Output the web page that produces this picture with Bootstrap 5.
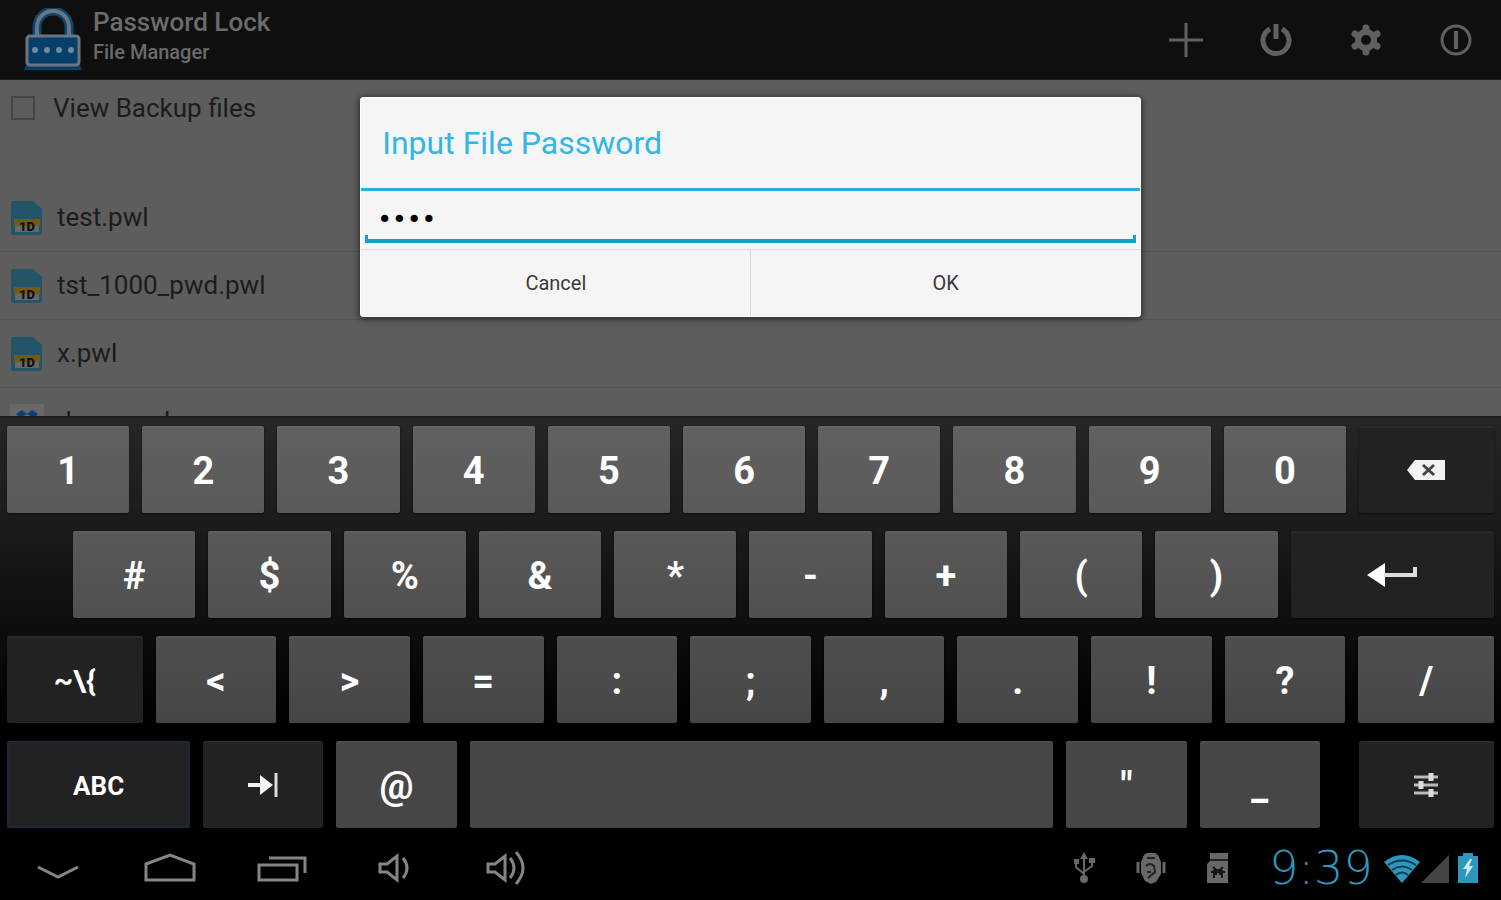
<!DOCTYPE html>
<html lang="en">
<head>
<meta charset="utf-8">
<meta name="viewport" content="width=device-width, initial-scale=1">
<title>Password Lock</title>
<link href="https://cdn.jsdelivr.net/npm/bootstrap@5.3.0/dist/css/bootstrap.min.css" rel="stylesheet">
<style>
  body { font-family: Roboto, "Liberation Sans", sans-serif; background: #000; }
  button { font-family: inherit; }
  svg { display: block; flex: none; }

  .app-bar { height: 80px; background: #0f0f0f; color: #6b6b6b; border-bottom: 1px solid #1c1c1c; padding-left: 24px; }
  .app-titles { padding: 6px 0 0 11px; }
  .app-title { font-size: 26px; line-height: 32px; font-weight: 500; }
  .app-sub { font-size: 20px; line-height: 28px; font-weight: 500; }
  .bar-action { width: 90px; border: 0; background: none; color: #606060; padding: 0; }

  .files-pane { background: #5d5d5d; color: #1c1c1c; font-size: 26px; min-height: 0; }
  .backup-row { height: 56px; padding: 0 11px; gap: 18px; }
  .backup-row input { appearance: none; width: 24px; height: 24px; margin: 0; border: 2px solid #454545; background: none; }
  .file-list { margin-top: 48px; }
  .file-row { height: 68px; padding: 0 10px; gap: 13px; border-bottom: 1px solid #545454; color: inherit; text-decoration: none; }

  .ask-box { width: 52%; margin-top: 17px; background: #f5f5f5; border: 1px solid #fdfdfd; border-radius: 3px; box-shadow: 0 1px 6px 1px rgba(0,0,0,.55); }
  .ask-title { font-size: 32px; line-height: 90px; color: #33b5e5; padding-left: 21px; border-bottom: 3px solid #27afdd; font-weight: 400; }
  .ask-input { display: block; width: calc(100% - 8px); height: 52px; margin: 0 4px 6px; padding: 4px 12px 0; border: 0; outline: 0; color: #000; font-family: "DejaVu Sans", sans-serif; font-size: 25px;
    background: linear-gradient(#1a9bc9,#1a9bc9) bottom/100% 4px no-repeat, linear-gradient(#1a9bc9,#1a9bc9) left bottom/3px 8px no-repeat, linear-gradient(#1a9bc9,#1a9bc9) right bottom/3px 8px no-repeat; }
  .ask-btn { height: 67px; border: 0; border-top: 1px solid #dedede; background: none; color: #3a3a3a; font-size: 20px; }
  .ask-btn + .ask-btn { border-left: 1px solid #d8d8d8; }

  .keyboard { background: linear-gradient(#262626, #191919 30%, #0b0b0b 55%, #000 75%); border-top: 2px solid #1b1b1b; padding: 8px 7px 5px; gap: 18px; }
  .key-row { gap: 13px; height: 87px; }
  .key { flex: 122 1 0; min-width: 0; border: 0; border-radius: 2px; padding: 3px 0 0; color: #fff; font-size: 38px; line-height: 44px; font-weight: 700;
    background: rgba(255,255,255,.275); box-shadow: inset 0 2px 0 rgba(255,255,255,.04), 0 1px 2px rgba(0,0,0,.6); }
  .key-sm { flex-grow: 120; }
  .key-dark { background: #222; font-size: 26px; }
  .key-alt { font-size: 30px; }
  .key-icon { padding: 0; }
  .key-end { flex-grow: 135; }
  .key-enter { flex-grow: 203; }
  .key-abc { flex-grow: 183; box-shadow: inset 0 0 0 2px #152c37; }
  .key-space { flex-grow: 583; }
  .gap-lead { flex: 53 1 0; }
  .gap-tail { flex: 13 1 0; }

  .sys-bar { height: 67px; padding: 2px 22px 0 2px; color: #858585; }
  .sys-btn { width: 112px; height: 65px; border: 0; background: none; color: inherit; padding: 0; }
  .sys-note { width: 67px; color: #686868; }
  .clock { width: 124px; font-family: "DejaVu Sans Light", "DejaVu Sans", sans-serif; font-weight: 200; font-size: 46px; line-height: 48px; color: #2f97bd; }
</style>
</head>
<body>
<div class="d-flex flex-column vh-100 overflow-hidden">

  <header class="app-bar d-flex flex-shrink-0">
    <svg class="mt-2" width="58" height="64" viewBox="0 0 58 64">
      <path d="M0 62h58l-3-8H3z" fill="#073f6b"/>
      <path d="M13 27V19a16 16 0 0 1 32 0v8" fill="none" stroke="#0c4674" stroke-width="9"/>
      <path d="M13 27V19a16 16 0 0 1 32 0v8" fill="none" stroke="#6b7580" stroke-width="4"/>
      <rect x="3" y="28" width="52" height="29" rx="3" fill="#073f6b" stroke="#6b7580" stroke-width="3"/>
      <g fill="#6d8aa0"><circle cx="11" cy="42" r="3"/><circle cx="23" cy="42" r="3"/><circle cx="35" cy="42" r="3"/><circle cx="47" cy="42" r="3"/></g>
    </svg>
    <div class="app-titles flex-grow-1">
      <div class="app-title">Password Lock</div>
      <div class="app-sub">File Manager</div>
    </div>
    <button class="bar-action d-flex align-items-center justify-content-center" aria-label="Add">
      <svg width="36" height="36" viewBox="0 0 36 36" stroke="currentColor" stroke-width="3"><path d="M18 1v34M1 18h34"/></svg>
    </button>
    <button class="bar-action d-flex align-items-center justify-content-center" aria-label="Exit">
      <svg width="36" height="36" viewBox="0 0 36 36" fill="none" stroke="currentColor" stroke-width="5"><path d="M12 7a13 13 0 1 0 12 0"/><path d="M18 2v15"/></svg>
    </button>
    <button class="bar-action d-flex align-items-center justify-content-center" aria-label="Settings">
      <svg width="36" height="36" viewBox="0 0 36 36"><g stroke="currentColor" stroke-width="7" stroke-linecap="round"><path d="M18 6v24M7 12l22 12M7 24l22-12"/></g><circle cx="18" cy="18" r="11" fill="currentColor"/><circle cx="18" cy="18" r="5" fill="#0f0f0f"/></svg>
    </button>
    <button class="bar-action d-flex align-items-center justify-content-center" aria-label="About">
      <svg width="36" height="36" viewBox="0 0 36 36" fill="none" stroke="currentColor"><circle cx="18" cy="18" r="14" stroke-width="3"/><path d="M18 9v18" stroke-width="4"/></svg>
    </button>
  </header>

  <main class="files-pane position-relative flex-grow-1 overflow-hidden">
    <label class="backup-row d-flex align-items-center"><input type="checkbox"><span>View Backup files</span></label>
    <div class="file-list">
      <a href="#" class="file-row d-flex align-items-center">
        <svg width="34" height="36" viewBox="0 0 34 36"><path d="M3 1h20l9 8v23a3 3 0 0 1-3 3H4a3 3 0 0 1-3-3V3a2 2 0 0 1 2-2z" fill="#235468"/><path d="M4 19h26v7H4z" fill="#765a12"/><path d="M5 26h24v6H5z" fill="#65696a"/><text x="17" y="31" font-size="13" font-weight="900" text-anchor="middle" fill="#111">1D</text></svg>
        <span>test.pwl</span></a>
      <a href="#" class="file-row d-flex align-items-center">
        <svg width="34" height="36" viewBox="0 0 34 36"><path d="M3 1h20l9 8v23a3 3 0 0 1-3 3H4a3 3 0 0 1-3-3V3a2 2 0 0 1 2-2z" fill="#235468"/><path d="M4 19h26v7H4z" fill="#765a12"/><path d="M5 26h24v6H5z" fill="#65696a"/><text x="17" y="31" font-size="13" font-weight="900" text-anchor="middle" fill="#111">1D</text></svg>
        <span>tst_1000_pwd.pwl</span></a>
      <a href="#" class="file-row d-flex align-items-center">
        <svg width="34" height="36" viewBox="0 0 34 36"><path d="M3 1h20l9 8v23a3 3 0 0 1-3 3H4a3 3 0 0 1-3-3V3a2 2 0 0 1 2-2z" fill="#235468"/><path d="M4 19h26v7H4z" fill="#765a12"/><path d="M5 26h24v6H5z" fill="#65696a"/><text x="17" y="31" font-size="13" font-weight="900" text-anchor="middle" fill="#111">1D</text></svg>
        <span>x.pwl</span></a>
      <a href="#" class="file-row d-flex align-items-center">
        <svg width="34" height="36" viewBox="0 0 34 36"><path d="M0 0h34v36H0z" fill="#686868"/><g fill="#0d3f7c"><path d="M12 6l5 4-7 4-4-4zM22 6l6 4-4 4-7-4zM10 14l7 4-5 4-6-4zM24 14l4 4-6 4-5-4zM17 20l5 4-5 4-5-4z"/></g></svg>
        <span>demo.pwl</span></a>
    </div>

    <div class="position-absolute top-0 start-0 w-100 d-flex justify-content-center">
      <form class="ask-box" role="dialog" aria-labelledby="ask-title">
        <label id="ask-title" for="pw" class="ask-title d-block">Input File Password</label>
        <input id="pw" class="ask-input" type="password" value="1234">
        <div class="d-flex">
          <button type="button" class="ask-btn w-50">Cancel</button>
          <button type="button" class="ask-btn w-50">OK</button>
        </div>
      </form>
    </div>
  </main>

  <section class="keyboard d-flex flex-column flex-shrink-0" aria-label="Keyboard">
    <div class="key-row d-flex">
      <button class="key">1</button><button class="key">2</button><button class="key">3</button><button class="key">4</button><button class="key">5</button><button class="key">6</button><button class="key">7</button><button class="key">8</button><button class="key">9</button><button class="key">0</button>
      <button class="key key-dark key-icon key-end d-flex align-items-center justify-content-center" aria-label="Backspace">
        <svg width="40" height="22" viewBox="0 0 40 22"><path d="M1 11l8-10h30v20H9z" fill="#f2f2f2"/><path d="M17 6l11 10M28 6L17 16" stroke="#444" stroke-width="3"/></svg>
      </button>
    </div>
    <div class="key-row d-flex">
      <span class="gap-lead"></span>
      <button class="key">#</button><button class="key">$</button><button class="key">%</button><button class="key">&amp;</button><button class="key">*</button><button class="key">-</button><button class="key">+</button><button class="key">(</button><button class="key">)</button>
      <button class="key key-dark key-icon key-enter d-flex align-items-center justify-content-center" aria-label="Enter">
        <svg width="52" height="26" viewBox="0 0 52 26"><path d="M1 13L19 1v24z" fill="#fff"/><path d="M18 13h31V5" fill="none" stroke="#ddd" stroke-width="4"/></svg>
      </button>
    </div>
    <div class="key-row d-flex">
      <button class="key key-dark key-alt key-end">~\{</button>
      <button class="key key-sm">&lt;</button><button class="key key-sm">&gt;</button><button class="key key-sm">=</button><button class="key key-sm">:</button><button class="key key-sm">;</button><button class="key key-sm">,</button><button class="key key-sm">.</button><button class="key key-sm">!</button><button class="key key-sm">?</button><button class="key key-end">/</button>
    </div>
    <div class="key-row d-flex">
      <button class="key key-dark key-abc">ABC</button>
      <button class="key key-sm key-dark key-icon d-flex align-items-center justify-content-center" aria-label="Tab">
        <svg width="32" height="26" viewBox="0 0 32 26"><path d="M1 11h12V3l13 10-13 10v-8H1z" fill="#f2f2f2"/><path d="M29 1v24" stroke="#ddd" stroke-width="3"/></svg>
      </button>
      <button class="key key-sm">@</button>
      <button class="key key-space" aria-label="Space"></button>
      <button class="key key-sm">"</button><button class="key key-sm">_</button>
      <span class="gap-tail"></span>
      <button class="key key-dark key-icon key-end d-flex align-items-center justify-content-center" aria-label="Input options">
        <svg width="26" height="26" viewBox="0 0 26 26" stroke="#bbb" stroke-width="3"><path d="M1 5h24M1 13h24M1 21h24"/><path d="M18 1v8M8 9v8M18 17v8" stroke="#ddd" stroke-width="5"/></svg>
      </button>
    </div>
  </section>

  <footer class="sys-bar d-flex align-items-center flex-shrink-0">
    <button class="sys-btn d-flex align-items-center justify-content-center" aria-label="Hide keyboard">
      <svg width="44" height="30" viewBox="0 0 44 30" fill="none" stroke="currentColor" stroke-width="3"><path d="M2 14l20 10 20-10"/></svg></button>
    <button class="sys-btn d-flex align-items-center justify-content-center" aria-label="Home">
      <svg width="54" height="30" viewBox="0 0 54 30" fill="none" stroke="currentColor" stroke-width="3"><path d="M3 11L27 2l24 9v16H3z"/></svg></button>
    <button class="sys-btn d-flex align-items-center justify-content-center" aria-label="Recent apps">
      <svg width="50" height="30" viewBox="0 0 50 30" fill="none" stroke="currentColor" stroke-width="3"><path d="M2 12h38v15H2z"/><path d="M12 5h36v15"/></svg></button>
    <button class="sys-btn d-flex align-items-center justify-content-center" aria-label="Volume down">
      <svg width="32" height="34" viewBox="0 0 32 34" fill="none" stroke="currentColor" stroke-width="3"><path d="M2 13v8h7l10 8V5L9 13z"/><path d="M25 7q8 10 0 20"/></svg></button>
    <button class="sys-btn d-flex align-items-center justify-content-center" aria-label="Volume up">
      <svg width="40" height="34" viewBox="0 0 40 34" fill="none" stroke="currentColor" stroke-width="3"><path d="M2 13v8h7l10 8V5L9 13z"/><path d="M24 7q8 10 0 20M30 1q14 16 0 32"/></svg></button>

    <div class="d-flex ms-auto me-2">
      <div class="sys-note d-flex justify-content-center">
        <svg width="22" height="32" viewBox="0 0 22 32" fill="none" stroke="currentColor" stroke-width="2"><path d="M11 4v24M3 9v6l8 7M19 9v5l-8 6"/><g fill="currentColor" stroke="none"><path d="M11 0l4 7H7zM1 7h5v5H1zM16 6h6v5h-6z"/><circle cx="11" cy="27" r="4"/></g></svg></div>
      <div class="sys-note d-flex justify-content-center">
        <svg width="30" height="32" viewBox="0 0 30 32"><path d="M8 3l3-2h8l3 2 3 7v12l-5 8-5 2-6-3-4-8V10z" fill="currentColor"/><path d="M2 10v11M28 10v11" stroke="currentColor" stroke-width="3"/><path d="M10 14q4-4 8 0l1 6-7 6M11 20h4M11 6h8" fill="none" stroke="#222" stroke-width="2"/></svg></div>
      <div class="sys-note d-flex justify-content-center">
        <svg width="24" height="32" viewBox="0 0 24 32"><path d="M4 1h18v30H1V12l3-3z" fill="currentColor"/><path d="M4 8h18" stroke="#222" stroke-width="2"/><path d="M7 15l3 3h4l3-3M5 20h14M8 18v8M16 18v8" fill="none" stroke="#151515" stroke-width="2"/><path d="M7 18h10v5H7z" fill="#151515"/><path d="M11 21h2v3h-2z" fill="currentColor"/></svg></div>
    </div>
    <time class="clock text-center">9:39</time>
    <div class="d-flex align-items-end">
      <svg width="38" height="30" viewBox="0 0 38 30" fill="none" stroke="#2f97bd"><path d="M1 8Q19-6 37 8L19 29z" fill="#2f97bd" stroke="none"/><g stroke="#0b3d50" stroke-width="2"><path d="M5 11q14-9 28 0M9 16q10-7 20 0M13 21q6-5 12 0"/></g></svg>
      <svg width="28" height="30" viewBox="0 0 28 30"><path d="M0 29L28 1v28z" fill="#444"/></svg>
      <svg class="ms-2" width="22" height="32" viewBox="0 0 22 32"><path d="M1 4h5V1h10v3h5v27H1z" fill="#2f97bd"/><path d="M13 7l-7 10h4l-2 9 8-12h-4l3-7z" fill="#d5e9f1"/></svg>
    </div>
  </footer>
</div>
<script src="https://cdn.jsdelivr.net/npm/bootstrap@5.3.0/dist/js/bootstrap.bundle.min.js"></script>
</body>
</html>
